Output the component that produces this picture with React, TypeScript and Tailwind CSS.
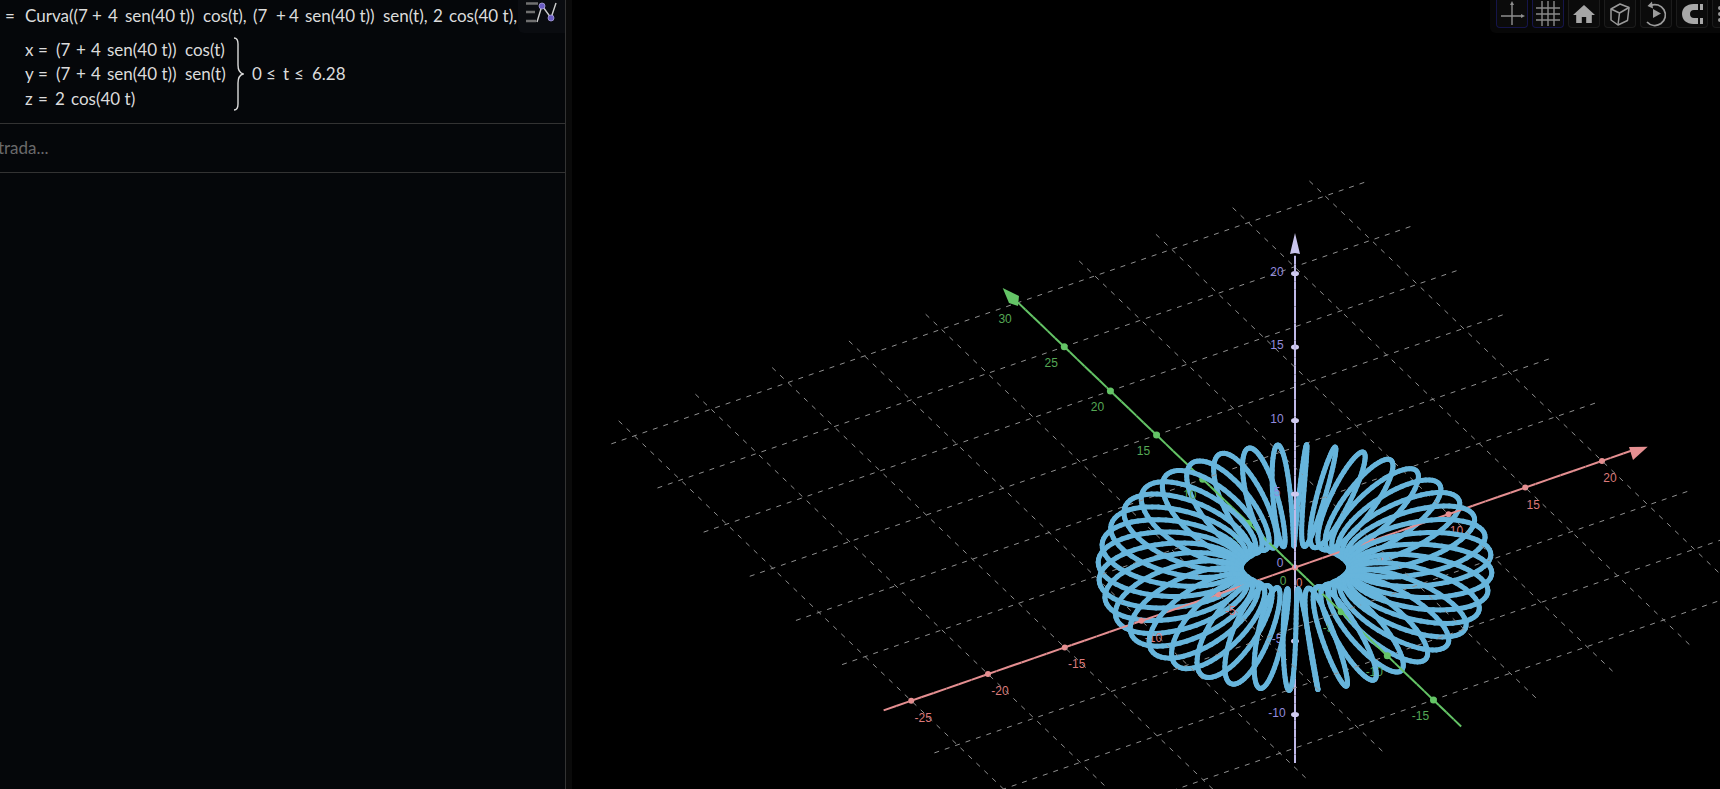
import type { ReactElement, ReactNode } from "react"

// screen projection of the 3D view, read off the axis ticks
const OX = 1295
const OY = 567.5
const project = (x: number, y: number, z: number): [number, number] => [
  OX + 15.35 * x - 9.23 * y,
  OY - 5.33 * x - 8.83 * y - 14.7 * z,
]
const depth = (x: number, y: number, z: number) => -135.7 * x - 225.6 * y + 184.7 * z

type P3 = [number, number, number]
type Item = { d: number; el: ReactElement }

function segment(a: P3, b: P3, stroke: string, width: number, key: string, round = true): Item {
  const [x1, y1] = project(...a)
  const [x2, y2] = project(...b)
  const d = depth((a[0] + b[0]) / 2, (a[1] + b[1]) / 2, (a[2] + b[2]) / 2)
  return {
    d,
    el: (
      <line
        key={key}
        x1={x1}
        y1={y1}
        x2={x2}
        y2={y2}
        stroke={stroke}
        strokeWidth={width}
        strokeLinecap={round ? "round" : "butt"}
      />
    ),
  }
}

function buildScene() {
  const items: Item[] = []

  // dashed floor grid
  const dashLine = (a: P3, b: P3, key: string) => {
    const [x1, y1] = project(...a)
    const [x2, y2] = project(...b)
    const len = Math.hypot(x2 - x1, y2 - y1)
    const at = (s: number): P3 => {
      const t = Math.min(s, len) / len
      return [a[0] + (b[0] - a[0]) * t, a[1] + (b[1] - a[1]) * t, 0]
    }
    let i = 0
    for (let s = 0; s < len; s += 11) {
      items.push(segment(at(s), at(s + 5), "#909090", 1, `${key}-${i++}`, false))
    }
  }
  for (let x = -25; x <= 20; x += 5) if (x !== 0) dashLine([x, 31.7, 0], [x, -18.2, 0], `gx${x}`)
  for (let y = -15; y <= 30; y += 5) if (y !== 0) dashLine([-26.5, y, 0], [22.8, y, 0], `gy${y}`)

  // axes
  const axis = (from: P3, to: P3, color: string, key: string) => {
    const n = 60
    for (let i = 0; i < n; i++) {
      const p = (t: number): P3 => [
        from[0] + (to[0] - from[0]) * t,
        from[1] + (to[1] - from[1]) * t,
        from[2] + (to[2] - from[2]) * t,
      ]
      items.push(segment(p(i / n), p((i + 1) / n), color, 2, `${key}${i}`, false))
    }
  }
  axis([-26.8, 0, 0], [22.2, 0, 0], "#e58f91", "ax")
  axis([0, -18, 0], [0, 30, 0], "#64c466", "ay")
  axis([0, 0, -13.3], [0, 0, 21.2], "#bfb9e8", "az")

  // tick dots
  const dot = (p: P3, color: string, rx: number, ry: number, key: string) => {
    const [cx, cy] = project(...p)
    items.push({ d: depth(...p) + 5, el: <ellipse key={key} cx={cx} cy={cy} rx={rx} ry={ry} fill={color} /> })
  }
  for (const x of [-25, -20, -15, -10, -5, 0, 5, 10, 15, 20]) dot([x, 0, 0], "#e58f91", 3, 3, `tx${x}`)
  for (const y of [-15, -10, -5, 5, 10, 15, 20, 25]) dot([0, y, 0], "#64c466", 3.5, 3.5, `ty${y}`)
  for (const z of [-10, -5, 5, 10, 15, 20]) dot([0, 0, z], "#d0cbf0", 4, 2.6, `tz${z}`)

  // tick labels
  const label = (p: P3, dx: number, dy: number, text: string, cls: string, key: string) => {
    const [x, y] = project(...p)
    items.push({
      d: depth(...p) + 6,
      el: (
        <text key={key} x={x + dx} y={y + dy} textAnchor="middle" dominantBaseline="central" className={cls}>
          {text}
        </text>
      ),
    })
  }
  const xCls = "fill-[#dc7a7a] text-[12px] font-['Liberation_Sans',sans-serif]"
  const yCls = "fill-[#55a855] text-[12px] font-['Liberation_Sans',sans-serif]"
  const zCls = "fill-[#928ade] text-[12px] font-['Liberation_Sans',sans-serif]"
  for (const x of [-25, -20, -15, -10, -5, 5, 10, 15, 20]) label([x, 0, 0], x < 0 ? 12 : 8, 17, String(x), xCls, `lx${x}`)
  for (const y of [-15, -10, -5, 5, 10, 15, 20, 25, 30]) label([0, y, 0], -13, 16, String(y), yCls, `ly${y}`)
  for (const z of [-10, -5, 5, 10, 15, 20]) label([0, 0, z], -18, -2, String(z), zCls, `lz${z}`)
  label([0, 0, 0], 4, 15.5, "0", xCls, "lx0")
  label([0, 0, 0], -12, 13.5, "0", yCls, "ly0")
  label([0, 0, 0], -15, -5, "0", zCls, "lz0")

  // the curve
  const N = 2400
  const curve = (t: number): P3 => {
    const r = 7 + 4 * Math.sin(40 * t)
    return [r * Math.cos(t), r * Math.sin(t), 2 * Math.cos(40 * t)]
  }
  for (let i = 0; i < N; i++) {
    const t0 = (i / N) * 6.2832
    const t1 = ((i + 1) / N) * 6.2832
    items.push(segment(curve(t0), curve(t1), "#67b5dc", 5, `c${i}`))
  }

  items.sort((a, b) => a.d - b.d)
  return items.map((i) => i.el)
}

const scene = buildScene()

function ToolButton({ selected, children }: { selected?: boolean; children: ReactNode }) {
  return (
    <div
      className={`flex h-[28px] w-[32px] shrink-0 items-center justify-center rounded-b-[4px] border border-t-0 bg-[#0b0b0b] ${
        selected ? "border-[#15154a]" : "border-[#1c1c1c]"
      }`}
    >
      {children}
    </div>
  )
}

function Toolbar() {
  return (
    <div className="absolute left-[918px] top-0 flex h-[33px] w-[230px] gap-[4px] rounded-bl-[6px] bg-[#070707] pl-[6px]">
      <ToolButton selected>
        <svg width="30" height="28" viewBox="0 0 30 28" fill="none" stroke="#8f8f8f" strokeWidth="1.4">
          <path d="M15 3v22M4 16h22" />
          <path d="M15 1l-2 4h4zM28 16l-4-2v4z" fill="#8f8f8f" stroke="none" />
        </svg>
      </ToolButton>
      <ToolButton selected>
        <svg width="30" height="28" viewBox="0 0 30 28" fill="none" stroke="#8a8a8a" strokeWidth="1.4">
          <path d="M9 1v25M15 1v25M21 1v25M3 8h24M3 14h24M3 20h24" />
        </svg>
      </ToolButton>
      <ToolButton>
        <svg width="30" height="28" viewBox="0 0 30 28" fill="#a6a6a6">
          <path d="M15 5L4 15h3.2v8h5.6v-6h4.4v6h5.6v-8H26z" />
        </svg>
      </ToolButton>
      <ToolButton>
        <svg width="30" height="28" viewBox="0 0 30 28" fill="none" stroke="#9a9a9a" strokeWidth="1.5" strokeLinejoin="round">
          <path d="M15 4l9 3.5-1.5 13L13 25l-7-5V9z" />
          <path d="M6 9l8.5 4 9.5-5.5M14.5 13L13 25" />
        </svg>
      </ToolButton>
      <ToolButton>
        <svg width="30" height="28" viewBox="0 0 30 28" fill="none" stroke="#9c9c9c" strokeWidth="1.7">
          <path d="M9.5 5.5A10.5 10.5 0 1 1 6 22" />
          <path d="M11 1.500L6.500 6l5.500 2.500z" fill="#9c9c9c" stroke="none" />
          <path d="M12 9l8 4.500-8 4.500z" fill="#9c9c9c" stroke="none" />
        </svg>
      </ToolButton>
      <ToolButton>
        <svg width="30" height="28" viewBox="0 0 30 28" fill="#a8a8a8">
          <path d="M26 4v6h-9c-2.500 0-4 1.600-4 4s1.500 4 4 4h9v6h-9.500C9.500 24 5 19.800 5 14S9.500 4 16.500 4z" />
          <rect x="21" y="3" width="2" height="8" fill="#0b0b0b" />
          <rect x="21" y="17" width="2" height="8" fill="#0b0b0b" />
        </svg>
      </ToolButton>
      <ToolButton>
        <svg width="30" height="28" viewBox="0 0 30 28" fill="#9a9a9a">
          <circle cx="7" cy="8" r="2" />
          <circle cx="7" cy="14" r="2" />
          <circle cx="7" cy="20" r="2" />
        </svg>
      </ToolButton>
    </div>
  )
}

function AlgebraToggle() {
  return (
    <div className="absolute right-0 top-0 h-[33px] w-[47px] rounded-bl-[6px] bg-[#0a0c10]">
      <svg width="47" height="33" viewBox="519 0 47 33" fill="none">
        <path d="M527 3.500h12M527 12h9M527 21h10" stroke="#707070" strokeWidth="2.500" />
        <path d="M538 22L543 5.500L552 18L557 3" stroke="#cfcfcf" strokeWidth="1.400" />
        <circle cx="543" cy="6" r="3" fill="#6a5cc4" stroke="#a9a2dd" strokeWidth="0.800" />
        <circle cx="552" cy="18" r="3" fill="#6a5cc4" stroke="#a9a2dd" strokeWidth="0.800" />
      </svg>
    </div>
  )
}

function Tok({ x, children }: { x: string; children: ReactNode }) {
  return <span className={`absolute top-0 whitespace-nowrap ${x}`}>{children}</span>
}

function Row({ className = "", children }: { className?: string; children: ReactNode }) {
  return <div className={`relative h-[24.5px] leading-[24.5px] ${className}`}>{children}</div>
}

export default function App() {
  return (
    <div className="flex h-[789px] w-[1720px] overflow-hidden bg-black font-['Lato',sans-serif] text-[17px] text-[#dcdcdc]">
      <aside className="relative flex w-[566px] shrink-0 flex-col overflow-hidden border-r border-[#333] bg-[#05070a]">
        <div className="h-[124px] border-b border-[#333]">
          <Row className="mt-[4px]">
            <Tok x="left-[5px]">=</Tok>
            <Tok x="left-[25px]">Curva((7</Tok>
            <Tok x="left-[92px]">+</Tok>
            <Tok x="left-[108px]">4</Tok>
            <Tok x="left-[125px]">sen(40 t))</Tok>
            <Tok x="left-[203px]">cos(t),</Tok>
            <Tok x="left-[253px]">(7</Tok>
            <Tok x="left-[276px]">+</Tok>
            <Tok x="left-[289px]">4</Tok>
            <Tok x="left-[305px]">sen(40 t))</Tok>
            <Tok x="left-[383px]">sen(t),</Tok>
            <Tok x="left-[433px]">2</Tok>
            <Tok x="left-[449px]">cos(40 t),</Tok>
          </Row>
          <div className="relative mt-[9px]">
            <Row>
              <Tok x="left-[25px]">x</Tok>
              <Tok x="left-[38px]">=</Tok>
              <Tok x="left-[56px]">(7</Tok>
              <Tok x="left-[76px]">+</Tok>
              <Tok x="left-[91px]">4</Tok>
              <Tok x="left-[107px]">sen(40 t))</Tok>
              <Tok x="left-[185px]">cos(t)</Tok>
            </Row>
            <Row>
              <Tok x="left-[25px]">y</Tok>
              <Tok x="left-[38px]">=</Tok>
              <Tok x="left-[56px]">(7</Tok>
              <Tok x="left-[76px]">+</Tok>
              <Tok x="left-[91px]">4</Tok>
              <Tok x="left-[107px]">sen(40 t))</Tok>
              <Tok x="left-[185px]">sen(t)</Tok>
              <Tok x="left-[252px]">0</Tok>
              <Tok x="left-[266px]">≤</Tok>
              <Tok x="left-[283px]">t</Tok>
              <Tok x="left-[294px]">≤</Tok>
              <Tok x="left-[312px]">6.28</Tok>
            </Row>
            <Row>
              <Tok x="left-[25px]">z</Tok>
              <Tok x="left-[38px]">=</Tok>
              <Tok x="left-[55px]">2</Tok>
              <Tok x="left-[71px]">cos(40 t)</Tok>
            </Row>
            <svg className="absolute left-[232px] top-[-1px]" width="12" height="74" viewBox="0 0 12 74" fill="none" stroke="#dcdcdc" strokeWidth="1.400">
              <path d="M2 1c3 0 4 2 4 6v21c0 5 2 8 5 9c-3 1-5 4-5 9v21c0 4-1 6-4 6" />
            </svg>
          </div>
        </div>
        <div className="flex h-[49px] items-center border-b border-[#333] text-[17px] text-[#6a6a6a]">
          <span className="-ml-[21px]">Entrada...</span>
        </div>
        <AlgebraToggle />
      </aside>
      <div className="w-[6px] shrink-0 bg-[#0a0a0a]" />
      <main className="relative min-w-0 flex-1 bg-black">
        <svg className="block h-full w-full" viewBox="572 0 1148 789">
          {scene}
          <polygon points="1647.7,446.700 1629,447 1633,460" fill="#e58f91" />
          <polygon points="1002.700,288 1019,296 1018,306 1009,303" fill="#64c466" />
          <polygon points="1295,233 1300,254 1295,253 1290,254" fill="#c9c4ec" />
        </svg>
        <Toolbar />
      </main>
    </div>
  )
}
